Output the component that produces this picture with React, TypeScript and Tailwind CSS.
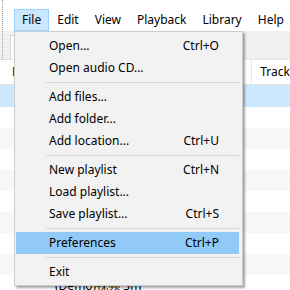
import React from "react";

type Item = { label: string; shortcut?: string; active?: boolean } | "sep";

const items: Item[] = [
  { label: "Open...", shortcut: "Ctrl+O" },
  { label: "Open audio CD..." },
  "sep",
  { label: "Add files..." },
  { label: "Add folder..." },
  { label: "Add location...", shortcut: "Ctrl+U" },
  "sep",
  { label: "New playlist", shortcut: "Ctrl+N" },
  { label: "Load playlist..." },
  { label: "Save playlist...", shortcut: "Ctrl+S" },
  "sep",
  { label: "Preferences", shortcut: "Ctrl+P", active: true },
  "sep",
  { label: "Exit" },
];

const font = { fontFamily: '"Noto Sans", "Noto Sans CJK SC", sans-serif' };

export default function App() {
  const rows = Array.from({ length: 9 });
  return (
    <div
      className="relative w-[290px] h-[290px] overflow-hidden bg-white text-black text-[12px]"
      style={font}
    >
      {/* menubar */}
      <div className="flex pt-[9px] pl-[14px] h-[31px] bg-white">
        <div className="h-[22px] px-[7px] flex items-center bg-[#cce8ff] border border-[#99d1ff]">File</div>
        {["Edit", "View", "Playback", "Library", "Help"].map((m) => (
          <div key={m} className="h-[22px] px-[8px] flex items-center">
            {m}
          </div>
        ))}
      </div>
      {/* toolbar / tabs */}
      <div className="h-[28px] bg-[#f0f0f0] flex items-end pl-[10px]">
        <div className="h-[24px] px-[2px] flex items-center bg-white border border-[#d9d9d9] border-b-0">
          New playlist
        </div>
      </div>
      {/* header */}
      <div className="h-[26px] flex border-y border-[#e5e5e5] bg-white">
        <div className="w-[253px] border-r border-[#e5e5e5] flex items-center pl-[12px]">Playing</div>
        <div className="flex items-center pl-[8px]">Track</div>
      </div>
      <div className="h-[22px] bg-[#cce8ff]" />
      {rows.map((_, i) => (
        <div
          key={i}
          className={`h-[21px] flex items-center pl-[55px] ${i % 2 === 0 ? "bg-white" : "bg-[#f7f7f7]"}`}
        >
          {i === 8 ? "(Demo)视频   3m" : ""}
        </div>
      ))}
      {/* left grip */}
      <div className="absolute left-[2px] top-0 h-[60px] w-[1px] border-l border-dotted border-[#999]" />

      {/* dropdown */}
      <div className="absolute left-[14px] top-[31px] w-[229px] bg-[#f2f2f2] border border-[#cccccc] pt-[3px] pb-[2px] px-[1px] shadow-[2px_2px_2px_rgba(0,0,0,0.35)]">
        {items.map((it, i) =>
          it === "sep" ? (
            <div key={i} className="h-[7px] flex items-center pl-[30px] pr-[2px]">
              <div className="h-[1px] w-full bg-[#d7d7d7]" />
            </div>
          ) : (
            <div
              key={i}
              className={`h-[22px] flex items-center pl-[33px] pr-[20px] mr-[2px] ${
                it.active ? "bg-[#91c9f7]" : ""
              }`}
            >
              <span className="flex-1">{it.label}</span>
              {it.shortcut && <span>{it.shortcut}</span>}
            </div>
          )
        )}
      </div>
    </div>
  );
}
